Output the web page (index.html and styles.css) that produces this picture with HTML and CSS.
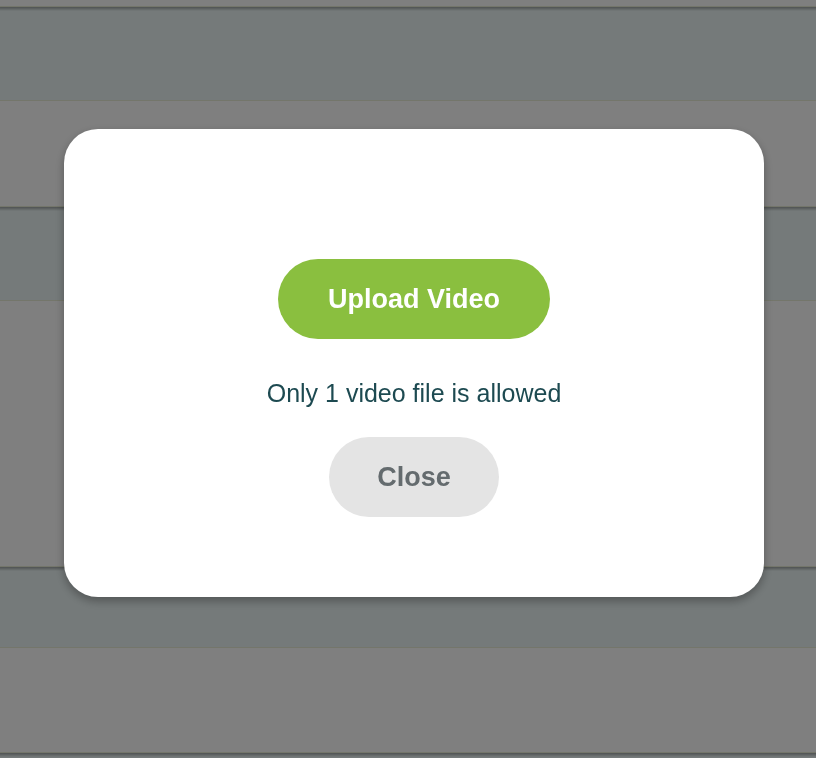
FILE: index.html
```html
<!DOCTYPE html>
<html lang="en">
<head>
<meta charset="utf-8">
<title>Upload Video</title>
<link rel="stylesheet" href="styles.css">
</head>
<body>
<div class="page">
  <div class="row row-plain row-h6"></div>
  <div class="row row-tint row-h95"></div>
  <div class="row row-plain row-h105"></div>
  <div class="row row-tint row-h95"></div>
  <div class="row row-plain row-h265"></div>
  <div class="row row-tint row-h82"></div>
  <div class="row row-plain row-h104"></div>
  <div class="row row-tint row-h40"></div>
</div>
<div class="overlay">
  <div class="modal">
    <button class="btn btn-upload" type="button">Upload Video</button>
    <p class="message">Only 1 video file is allowed</p>
    <button class="btn btn-close" type="button">Close</button>
  </div>
</div>
</body>
</html>
```

FILE: styles.css
```css
* { box-sizing: border-box; }
html, body {
  margin: 0;
  padding: 0;
  height: 100%;
  overflow: hidden;
  font-family: "Liberation Sans", Arial, sans-serif;
}
.page {
  display: flex;
  flex-direction: column;
}
.row { flex: none; }
.row-plain { background: #ffffff; }
.row-tint {
  background: linear-gradient(rgba(0, 0, 0, 0.32), rgba(0, 0, 0, 0) 4px), #eaf4f4;
  border-top: 1px solid #e8edd6;
  border-bottom: 1px solid #e8edd6;
}
.row-h6 { height: 6px; }
.row-h95 { height: 95px; }
.row-h105 { height: 105px; }
.row-h265 { height: 265px; }
.row-h82 { height: 82px; }
.row-h104 { height: 104px; }
.row-h40 { height: 40px; }

.overlay {
  position: fixed;
  inset: 0;
  background: rgba(0, 0, 0, 0.5);
  display: flex;
  align-items: flex-start;
  padding: 129px 0 0 64px;
}
.modal {
  width: 700px;
  height: 468px;
  background: #ffffff;
  border-radius: 34px;
  box-shadow: 0 4px 10px rgba(0, 0, 0, 0.3);
  display: flex;
  flex-direction: column;
  align-items: center;
  padding-top: 130px;
}
.btn {
  border: none;
  height: 80px;
  border-radius: 40px;
  font-family: "Liberation Sans", Arial, sans-serif;
  font-weight: bold;
  font-size: 27px;
  padding: 0;
  cursor: pointer;
}
.btn-upload {
  width: 272px;
  background: #8abf3f;
  color: #ffffff;
}
.btn-close {
  width: 170px;
  background: #e4e4e4;
  color: #646b6e;
}
.message {
  margin: 40px 0 30px;
  font-size: 25px;
  line-height: 28px;
  color: #1d4a51;
}
```
